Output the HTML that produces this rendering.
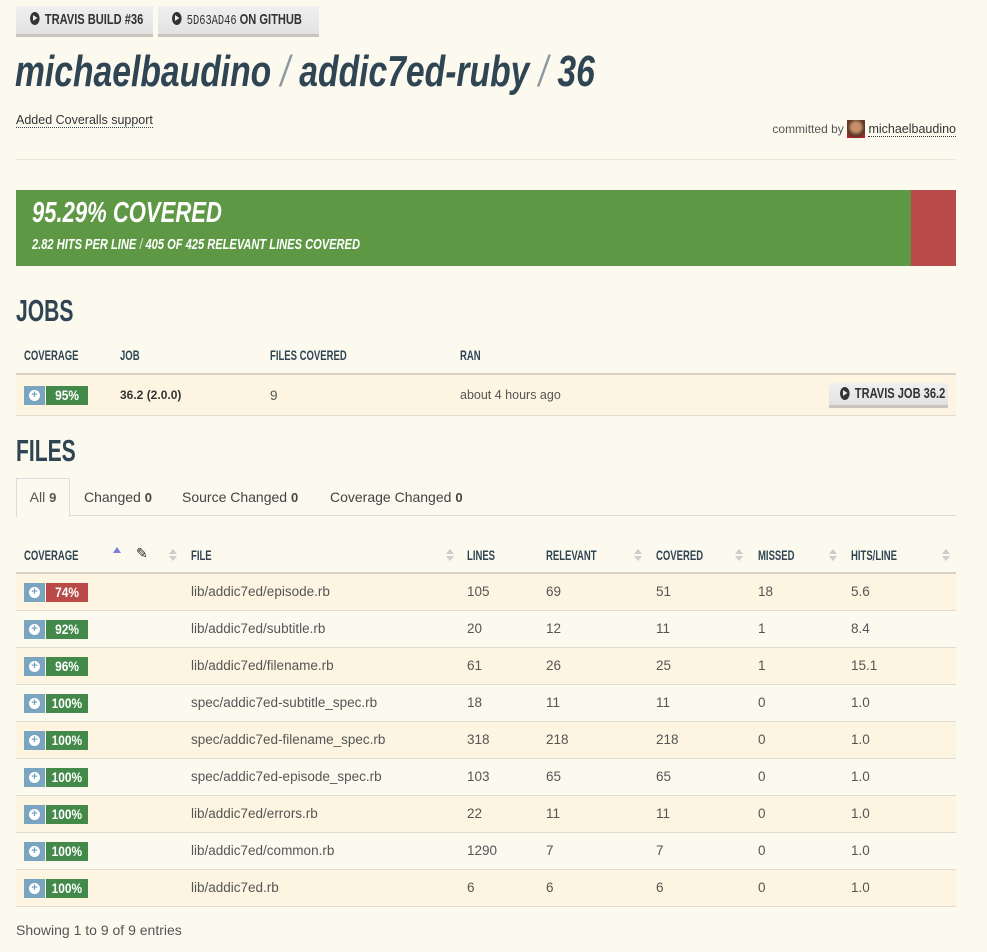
<!DOCTYPE html>
<html><head><meta charset="utf-8"><style>
body{margin:0;background:#fcf9ef;font-family:"Liberation Sans",sans-serif;color:#4a4a4a;width:987px;height:952px;position:relative;overflow:hidden}
.a{position:absolute;white-space:nowrap}
.c{font-family:"Liberation Sans",sans-serif;font-weight:bold;transform:scaleX(.76);transform-origin:0 0;white-space:nowrap}
.btn{position:absolute;top:6px;height:28px;background:linear-gradient(#f0f0f0,#e2e2e2);border-bottom:3px solid #c9c5bd;font-size:15px;color:#333;line-height:28px;white-space:nowrap}
.btn .t{position:absolute;left:14px;top:0;font-weight:bold;transform:scaleX(.74);transform-origin:0 0}
.ic{display:inline-block;width:13px;height:13px;border-radius:50%;background:#333;vertical-align:-1px;margin-right:7px;position:relative}
.ic:after{content:"";position:absolute;left:4px;top:3px;border-left:6px solid #f0f0f0;border-top:3.5px solid transparent;border-bottom:3.5px solid transparent}
.row{position:absolute;left:16px;width:940px;height:36px;border-bottom:1px solid #e0dccf;font-size:13.5px;color:#555}
.row.s{background:#fdf5e2}
.row>span{position:absolute;top:10px}
.bd{position:absolute;left:8px;top:9px;height:19px;width:64px;color:#fff;font-size:14px}
.bd i{position:absolute;left:0;top:0;width:21px;height:19px;background:#7aa5c1}
.bd i:after{content:"+";position:absolute;left:5px;top:4px;width:11px;height:11px;border-radius:50%;background:#fff;color:#7aa5c1;font-size:11px;line-height:11px;text-align:center;font-style:normal;font-weight:bold}
.bd b{position:absolute;left:22px;top:0;width:42px;height:19px;line-height:19px;text-align:center;background:#438a4a}
.bd b.r{background:#b94a48}
.bd b em{display:inline-block;font-style:normal;transform:scaleX(.85)}
.h{position:absolute;font-size:14px;color:#2f4554;font-weight:bold;transform:scaleX(.68);transform-origin:0 0;white-space:nowrap}
.ar{position:absolute;width:0;height:0;border-left:4px solid transparent;border-right:4px solid transparent}
</style></head><body>
<div class="btn" style="left:16px;width:137px"><span class="t"><span class="ic"></span>TRAVIS BUILD #36</span></div>
<div class="btn" style="left:158px;width:161px"><span class="t"><span class="ic"></span><span style="font-weight:normal;font-family:'Liberation Mono';font-size:14px">5D63AD46</span> ON GITHUB</span></div>
<div class="a c" style="left:15px;top:47px;font-size:44px;font-style:italic;color:#2f4554;transform:scaleX(.765)">michaelbaudino <span style="color:#8e9aa0;font-weight:normal">/</span> addic7ed-ruby <span style="color:#8e9aa0;font-weight:normal">/</span> 36</div>
<div class="a" style="left:16px;top:113px;font-size:12.5px;color:#333;border-bottom:1px dotted #2f4554">Added Coveralls support</div>
<div class="a" style="right:31px;top:120px;font-size:12px;color:#555">committed by <span style="display:inline-block;width:18px;height:18px;background:radial-gradient(circle at 50% 40%,#c8906a 30%,#5a3a2a 60%,#b22 90%);vertical-align:-5px"></span> <span style="color:#333;border-bottom:1px dotted #333;font-size:12.5px">michaelbaudino</span></div>
<div class="a" style="left:16px;top:159px;width:940px;height:1px;background:#ebe6da"></div>
<div class="a" style="left:16px;top:190px;width:895px;height:76px;background:#5f9845"></div>
<div class="a" style="left:911px;top:190px;width:45px;height:76px;background:#b94a48"></div>
<div class="a c" style="left:32px;top:197px;font-size:29px;font-style:italic;color:#fff">95.29% COVERED</div>
<div class="a c" style="left:32px;top:236px;font-size:15px;font-style:italic;color:#fff;transform:scaleX(.74)">2.82 HITS PER LINE <span style="opacity:.6">/</span> 405 OF 425 RELEVANT LINES COVERED</div>
<div class="a c" style="left:16px;top:293px;font-size:31px;color:#2f4554;transform:scaleX(.68)">JOBS</div>
<div class="h" style="left:24px;top:347px">COVERAGE</div>
<div class="h" style="left:120px;top:347px">JOB</div>
<div class="h" style="left:270px;top:347px">FILES COVERED</div>
<div class="h" style="left:460px;top:347px">RAN</div>
<div class="a" style="left:16px;top:373px;width:940px;height:2px;background:#d8d3c6"></div>
<div class="row s" style="top:375px;height:40px">
<div class="bd" style="top:11px"><i></i><b><em>95%</em></b></div>
<span style="left:104px;top:13px;font-weight:bold;font-size:12px;color:#333">36.2 (2.0.0)</span>
<span style="left:254px;top:13px">9</span>
<span style="left:444px;top:13px;font-size:12.5px">about 4 hours ago</span>
<div class="btn" style="left:813px;top:8px;width:119px;height:22px;line-height:22px;font-size:15px"><span class="t" style="left:11px"><span class="ic" style="vertical-align:-2px"></span>TRAVIS JOB 36.2</span></div>
</div>
<div class="a c" style="left:16px;top:433px;font-size:31px;color:#2f4554;transform:scaleX(.68)">FILES</div>
<div class="a" style="left:16px;top:515px;width:940px;height:1px;background:#ddd"></div>
<div class="a" style="left:16px;top:478px;width:52px;height:38px;border:1px solid #ddd;border-bottom:none;background:#fcf9ef;font-size:14px;color:#555;text-align:center;line-height:37px">All <b style="font-size:13px">9</b></div>
<div class="a" style="left:84px;top:489px;font-size:14px;color:#444">Changed <b style="font-size:13px">0</b></div>
<div class="a" style="left:182px;top:489px;font-size:14px;color:#444">Source Changed <b style="font-size:13px">0</b></div>
<div class="a" style="left:330px;top:489px;font-size:14px;color:#444">Coverage Changed <b style="font-size:13px">0</b></div>
<div class="h" style="left:24px;top:547px">COVERAGE</div>
<div class="ar" style="left:113px;top:547px;border-bottom:6px solid #7b7de0"></div>
<div class="a" style="left:136px;top:545px;font-size:14px;color:#222">✎</div>
<div class="h" style="left:191px;top:547px">FILE</div>
<div class="h" style="left:467px;top:547px">LINES</div>
<div class="h" style="left:546px;top:547px">RELEVANT</div>
<div class="h" style="left:656px;top:547px">COVERED</div>
<div class="h" style="left:758px;top:547px">MISSED</div>
<div class="h" style="left:851px;top:547px">HITS/LINE</div>
<div class="ar" style="left:169px;top:549px;border-bottom:5px solid #ccc"></div><div class="ar" style="left:169px;top:556px;border-top:5px solid #ccc"></div>
<div class="ar" style="left:446px;top:549px;border-bottom:5px solid #ccc"></div><div class="ar" style="left:446px;top:556px;border-top:5px solid #ccc"></div>
<div class="ar" style="left:634px;top:549px;border-bottom:5px solid #ccc"></div><div class="ar" style="left:634px;top:556px;border-top:5px solid #ccc"></div>
<div class="ar" style="left:735px;top:549px;border-bottom:5px solid #ccc"></div><div class="ar" style="left:735px;top:556px;border-top:5px solid #ccc"></div>
<div class="ar" style="left:829px;top:549px;border-bottom:5px solid #ccc"></div><div class="ar" style="left:829px;top:556px;border-top:5px solid #ccc"></div>
<div class="ar" style="left:942px;top:549px;border-bottom:5px solid #ccc"></div><div class="ar" style="left:942px;top:556px;border-top:5px solid #ccc"></div>
<div class="a" style="left:16px;top:572px;width:940px;height:2px;background:#d8d3c6"></div>

<div class="row s" style="top:574px"><div class="bd"><i></i><b class="r"><em>74%</em></b></div><span style="left:175px">lib/addic7ed/episode.rb</span><span style="left:451px">105</span><span style="left:530px">69</span><span style="left:640px">51</span><span style="left:742px">18</span><span style="left:835px">5.6</span></div>
<div class="row" style="top:611px"><div class="bd"><i></i><b><em>92%</em></b></div><span style="left:175px">lib/addic7ed/subtitle.rb</span><span style="left:451px">20</span><span style="left:530px">12</span><span style="left:640px">11</span><span style="left:742px">1</span><span style="left:835px">8.4</span></div>
<div class="row s" style="top:648px"><div class="bd"><i></i><b><em>96%</em></b></div><span style="left:175px">lib/addic7ed/filename.rb</span><span style="left:451px">61</span><span style="left:530px">26</span><span style="left:640px">25</span><span style="left:742px">1</span><span style="left:835px">15.1</span></div>
<div class="row" style="top:685px"><div class="bd"><i></i><b><em>100%</em></b></div><span style="left:175px">spec/addic7ed-subtitle_spec.rb</span><span style="left:451px">18</span><span style="left:530px">11</span><span style="left:640px">11</span><span style="left:742px">0</span><span style="left:835px">1.0</span></div>
<div class="row s" style="top:722px"><div class="bd"><i></i><b><em>100%</em></b></div><span style="left:175px">spec/addic7ed-filename_spec.rb</span><span style="left:451px">318</span><span style="left:530px">218</span><span style="left:640px">218</span><span style="left:742px">0</span><span style="left:835px">1.0</span></div>
<div class="row" style="top:759px"><div class="bd"><i></i><b><em>100%</em></b></div><span style="left:175px">spec/addic7ed-episode_spec.rb</span><span style="left:451px">103</span><span style="left:530px">65</span><span style="left:640px">65</span><span style="left:742px">0</span><span style="left:835px">1.0</span></div>
<div class="row s" style="top:796px"><div class="bd"><i></i><b><em>100%</em></b></div><span style="left:175px">lib/addic7ed/errors.rb</span><span style="left:451px">22</span><span style="left:530px">11</span><span style="left:640px">11</span><span style="left:742px">0</span><span style="left:835px">1.0</span></div>
<div class="row" style="top:833px"><div class="bd"><i></i><b><em>100%</em></b></div><span style="left:175px">lib/addic7ed/common.rb</span><span style="left:451px">1290</span><span style="left:530px">7</span><span style="left:640px">7</span><span style="left:742px">0</span><span style="left:835px">1.0</span></div>
<div class="row s" style="top:870px"><div class="bd"><i></i><b><em>100%</em></b></div><span style="left:175px">lib/addic7ed.rb</span><span style="left:451px">6</span><span style="left:530px">6</span><span style="left:640px">6</span><span style="left:742px">0</span><span style="left:835px">1.0</span></div>
<div class="a" style="left:16px;top:922px;font-size:14px;color:#555">Showing 1 to 9 of 9 entries</div>
</body></html>
